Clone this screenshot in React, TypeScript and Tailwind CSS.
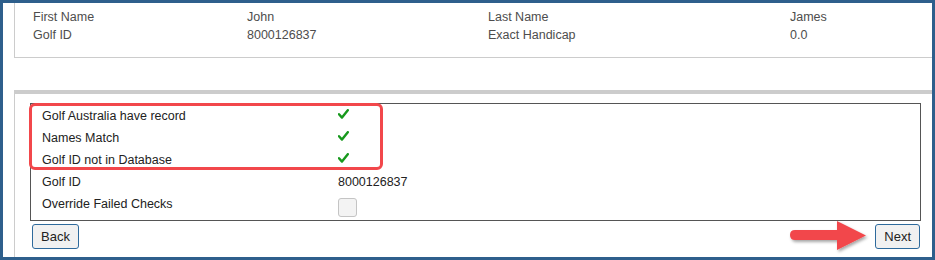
import React from "react";

const font = { fontFamily: '"Liberation Sans", Arial, sans-serif' };

const Check: React.FC = () => (
  <svg width="11" height="10" viewBox="0 0 11 10" className="mt-[4px]">
    <path d="M1 5.2 L4 8.6 L9.8 1.2" fill="none" stroke="#17991d" strokeWidth="2.4" strokeLinecap="round" strokeLinejoin="round" />
  </svg>
);

const checks = ["Golf Australia have record", "Names Match", "Golf ID not in Database"];

const App: React.FC = () => {
  return (
    <div style={font} className="w-[935px] h-[260px] border-[3px] border-[#2e5f8c] bg-white text-[12.5px] overflow-hidden">
      <div className="pl-[11px] h-full flex flex-col">
        {/* Player summary */}
        <div className="border-l border-b border-[#cccccc] h-[55px] pt-[5px] pl-[18px] text-[#4d4d4d] leading-[18px]">
          <div className="grid grid-cols-[214px_241px_302px_1fr]">
            <span>First Name</span>
            <span>John</span>
            <span>Last Name</span>
            <span>James</span>
            <span>Golf ID</span>
            <span>8000126837</span>
            <span>Exact Handicap</span>
            <span>0.0</span>
          </div>
        </div>

        {/* Checks panel */}
        <div className="mt-[32px] flex-1 border-t-[4px] border-l border-[#cccccc] pt-[9px] pl-[15px] pr-[11px]">
          <div className="relative border border-[#555555] pt-[1px] pb-[3px] text-[#222222]">
            {checks.map((c) => (
              <div key={c} className="flex h-[22px] leading-[22px]">
                <span className="w-[307px] pl-[11px]">{c}</span>
                <Check />
              </div>
            ))}
            <div className="flex h-[22px] leading-[22px]">
              <span className="w-[307px] pl-[11px]">Golf ID</span>
              <span>8000126837</span>
            </div>
            <div className="flex items-start h-[24px] leading-[22px]">
              <span className="w-[307px] pl-[11px]">Override Failed Checks</span>
              <span className="mt-[5px] w-[19px] h-[19px] rounded-[3px] border border-[#c4c4c4] bg-[#f3f3f3]" />
            </div>

            {/* annotation box */}
            <div className="absolute left-[-2px] top-[-1px] w-[354px] h-[67px] border-[3px] border-[#f2474b] rounded-[6px]" />
          </div>

          <div className="relative flex justify-between mt-[3px] pl-[2px] pr-[1px]">
            <button className="h-[25px] px-[8px] rounded-[3px] border border-[#2e6a9c] bg-[#f1f1f1] text-[#222222] text-[13px]">
              Back
            </button>
            <button className="h-[25px] px-[8px] rounded-[3px] border border-[#2e6a9c] bg-[#f1f1f1] text-[#222222] text-[13px]">
              Next
            </button>

            {/* annotation arrow */}
            <svg width="90" height="40" viewBox="0 0 90 40" className="absolute right-[46px] top-[-4px]">
              <defs>
                <filter id="sh" x="-20%" y="-30%" width="140%" height="170%">
                  <feDropShadow dx="1.5" dy="2" stdDeviation="1.5" floodColor="#000" floodOpacity="0.35" />
                </filter>
              </defs>
              <path
                d="M10 10 L52 10 L52 1 L81 15.5 L52 30 L52 20 L10 20 Q5 20 5 15 Q5 10 10 10 Z"
                fill="#f2474b"
                filter="url(#sh)"
              />
            </svg>
          </div>
        </div>
      </div>
    </div>
  );
};

export default App;
